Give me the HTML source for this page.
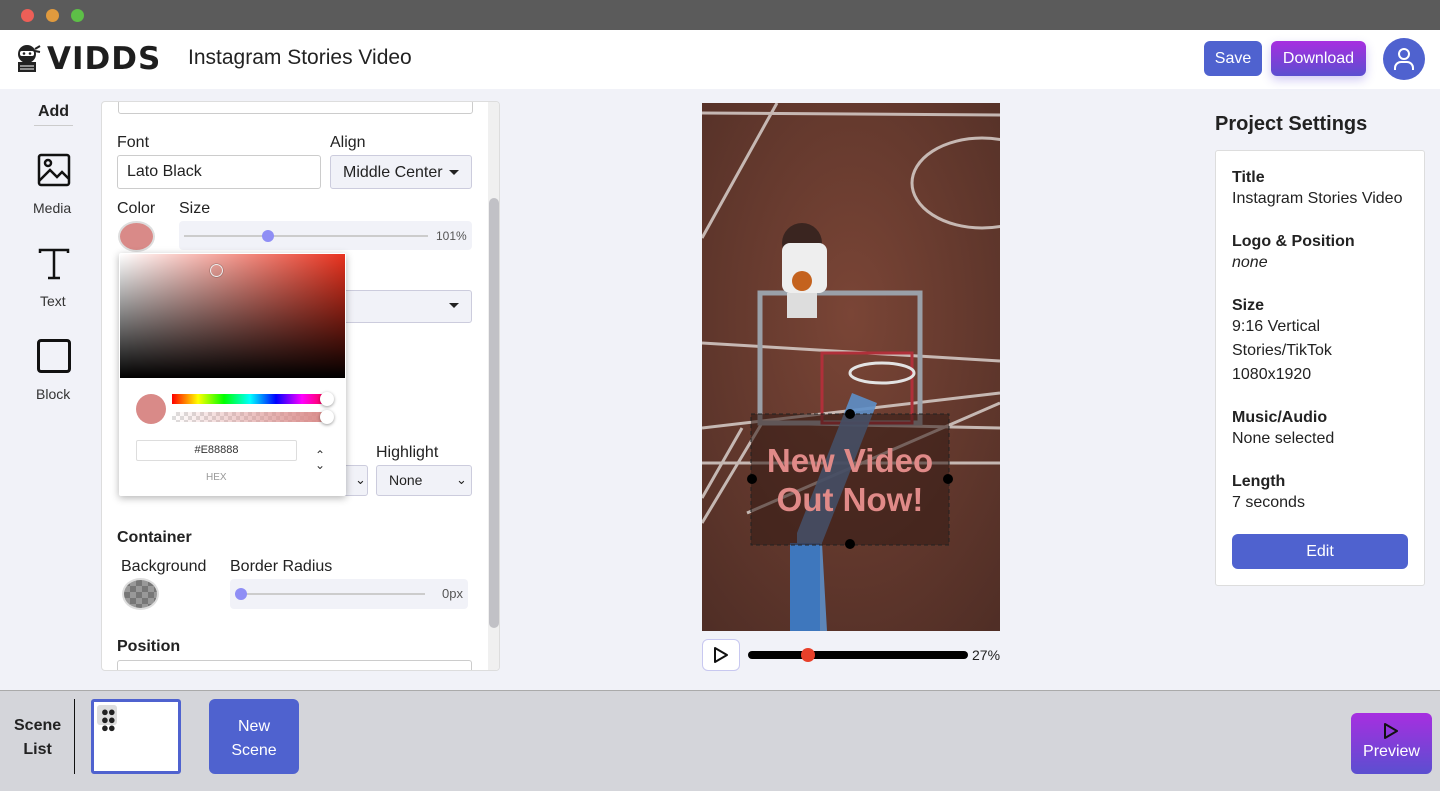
<!DOCTYPE html>
<html><head><meta charset="utf-8"><style>
*{box-sizing:border-box;margin:0;padding:0}
body{width:1440px;height:791px;overflow:hidden;font-family:"Liberation Sans",sans-serif;background:#f1f2f8;position:relative;color:#222}
.a{position:absolute}
.tb{left:0;top:0;width:1440px;height:30px;background:#5b5b5b}
.dot{top:9px;width:13px;height:13px;border-radius:50%}
.hdr{left:0;top:30px;width:1440px;height:59px;background:#fff}
.lbl{font-size:16px;color:#222}
.inp{border:1px solid #ccc;border-radius:3px;background:#fff;font-size:16px;padding:7px 9px}
.sel{border:1px solid #ccd;border-radius:3px;background:#f1f2f8;font-size:16px}
.caret{width:0;height:0;border-left:5px solid transparent;border-right:5px solid transparent;border-top:5px solid #222}
.btn{background:#4f62cf;color:#fff;border-radius:6px;font-size:16px;text-align:center}
.rs b{display:block;font-size:16px;margin-bottom:4px}
.rs div{font-size:16px;margin-bottom:22px;line-height:24px}
</style></head><body>
<div class="a tb"></div>
<div class="a dot" style="left:21px;background:#ed5f57"></div>
<div class="a dot" style="left:46px;background:#e09a3e"></div>
<div class="a dot" style="left:71px;background:#5dbf47"></div>
<div class="a hdr"></div>
<svg class="a" style="left:15px;top:43px" width="26" height="30" viewBox="0 0 26 30"><circle cx="12" cy="11" r="9" fill="#222"/><rect x="5" y="8" width="14" height="5" rx="2" fill="#fff"/><circle cx="9" cy="10.5" r="1.3" fill="#222"/><circle cx="15" cy="10.5" r="1.3" fill="#222"/><path d="M20 6l5-3M20 8l5 1" stroke="#222" stroke-width="2"/><rect x="3" y="19" width="18" height="10" fill="#222"/><path d="M5 23h14M5 26h14" stroke="#fff" stroke-width="1"/></svg>
<div class="a" style="left:47px;top:41px;font-size:31px;font-weight:900;letter-spacing:1px;color:#1e1e1e;font-family:'DejaVu Sans',sans-serif">VIDDS</div>
<div class="a" style="left:188px;top:46px;font-size:21px;color:#222">Instagram Stories Video</div>
<div class="a btn" style="left:1204px;top:41px;width:58px;height:35px;line-height:35px">Save</div>
<div class="a btn" style="left:1271px;top:41px;width:95px;height:35px;line-height:35px;background:linear-gradient(#a72ee0,#5b4fd0);box-shadow:0 4px 10px rgba(100,80,220,.3)">Download</div>
<div class="a" style="left:1383px;top:38px;width:42px;height:42px;border-radius:50%;background:#4f62cf"></div>
<svg class="a" style="left:1392px;top:46px" width="24" height="26" viewBox="0 0 24 26" fill="none" stroke="#fff" stroke-width="2"><circle cx="12" cy="8" r="5"/><path d="M3 24v-2a6 6 0 0 1 6-6h6a6 6 0 0 1 6 6v2"/></svg>

<div class="a" style="left:34px;top:103px;width:39px;text-align:center;font-weight:bold;font-size:16px;border-bottom:1px solid #ccc;padding-bottom:4px">Add</div>
<svg class="a" style="left:37px;top:153px" width="34" height="34" viewBox="0 0 34 34" fill="none" stroke="#111" stroke-width="2.5"><rect x="2" y="2" width="30" height="30" rx="2"/><circle cx="11" cy="10" r="3"/><path d="M2 28l11-11 7 7 5-5 7 7"/></svg>
<div class="a lbl" style="left:33px;top:200px;font-size:14px;color:#333">Media</div>
<svg class="a" style="left:38px;top:248px" width="32" height="32" viewBox="0 0 32 32" fill="none" stroke="#111" stroke-width="2.5"><path d="M2 5V2h28v3M16 2v28M10 30h12"/></svg>
<div class="a" style="left:40px;top:293px;font-size:14px;color:#333">Text</div>
<div class="a" style="left:37px;top:339px;width:34px;height:34px;border:3px solid #111;border-radius:4px"></div>
<div class="a" style="left:36px;top:386px;font-size:14px;color:#333">Block</div>

<div class="a" style="left:101px;top:101px;width:399px;height:570px;background:#fff;border:1px solid #ddd;border-radius:4px;overflow:hidden">
 <div class="a" style="left:16px;top:-2px;width:355px;height:14px;border:1px solid #ccc;border-radius:3px"></div>
 <div class="a" style="left:386px;top:0;width:12px;height:570px;background:#f0f0f0"></div>
 <div class="a" style="left:387px;top:96px;width:10px;height:430px;background:#c1c1c6;border-radius:5px"></div>
</div>
<div class="a lbl" style="left:117px;top:134px">Font</div>
<div class="a lbl" style="left:330px;top:134px">Align</div>
<div class="a inp" style="left:117px;top:155px;width:204px;height:34px">Lato Black</div>
<div class="a sel" style="left:330px;top:155px;width:142px;height:34px;padding:8px 12px">Middle Center</div>
<div class="a caret" style="left:449px;top:170px"></div>
<div class="a lbl" style="left:117px;top:200px">Color</div>
<div class="a lbl" style="left:179px;top:200px">Size</div>
<div class="a" style="left:118px;top:221px;width:37px;height:31px;border-radius:50%;background:#d98a88;border:2px solid #ddd"></div>
<div class="a" style="left:179px;top:221px;width:293px;height:29px;background:#f1f2f8;border-radius:4px"></div>
<div class="a" style="left:184px;top:235px;width:244px;height:2px;background:#ccc"></div>
<div class="a" style="left:262px;top:230px;width:12px;height:12px;border-radius:50%;background:#8f8ef5"></div>
<div class="a" style="left:436px;top:229px;font-size:12px;color:#555">101%</div>
<div class="a sel" style="left:330px;top:290px;width:142px;height:33px"></div>
<div class="a caret" style="left:449px;top:303px"></div>
<div class="a lbl" style="left:376px;top:444px">Highlight</div>
<div class="a sel" style="left:330px;top:465px;width:38px;height:31px"></div>
<div class="a" style="left:355px;top:472px;font-size:13px">⌄</div>
<div class="a sel" style="left:376px;top:465px;width:96px;height:31px;padding:6px 12px;font-size:14px">None</div>
<div class="a" style="left:456px;top:472px;font-size:13px">⌄</div>
<div class="a" style="left:117px;top:529px;font-weight:bold;font-size:16px">Container</div>
<div class="a lbl" style="left:121px;top:558px">Background</div>
<div class="a lbl" style="left:230px;top:558px">Border Radius</div>
<div class="a" style="left:122px;top:578px;width:37px;height:32px;border-radius:50%;background:repeating-conic-gradient(#999 0 25%,#777 0 50%) 0 0/12px 12px;border:2px solid #ddd"></div>
<div class="a" style="left:230px;top:579px;width:238px;height:30px;background:#f1f2f8;border-radius:4px"></div>
<div class="a" style="left:240px;top:593px;width:185px;height:2px;background:#ccc"></div>
<div class="a" style="left:235px;top:588px;width:12px;height:12px;border-radius:50%;background:#8f8ef5"></div>
<div class="a" style="left:442px;top:586px;font-size:13px;color:#555">0px</div>
<div class="a" style="left:117px;top:638px;font-weight:bold;font-size:16px">Position</div>
<div class="a" style="left:117px;top:660px;width:355px;height:10px;border:1px solid #ccc;border-bottom:none;border-radius:3px 3px 0 0"></div>

<div class="a" style="left:119px;top:253px;width:227px;height:243px;background:#fff;box-shadow:0 2px 8px rgba(0,0,0,.3);border-radius:2px">
 <div class="a" style="left:1px;top:1px;width:225px;height:124px;background:linear-gradient(to top,#000,transparent),linear-gradient(to right,#fff,#e8321e)"></div>
 <div class="a" style="left:91px;top:11px;width:13px;height:13px;border-radius:50%;border:1.5px solid #eee;box-shadow:0 0 1px #000"></div>
 <div class="a" style="left:17px;top:141px;width:30px;height:30px;border-radius:50%;background:#d98a88"></div>
 <div class="a" style="left:53px;top:141px;width:156px;height:10px;background:linear-gradient(to right,#f00,#ff0,#0f0,#0ff,#00f,#f0f,#f03)"></div>
 <div class="a" style="left:53px;top:159px;width:156px;height:10px;background:linear-gradient(to right,rgba(217,138,136,0),#d98a88),repeating-conic-gradient(#ddd 0 25%,#fff 0 50%) 0 0/8px 8px"></div>
 <div class="a" style="left:201px;top:139px;width:14px;height:14px;border-radius:50%;background:#fff;box-shadow:0 1px 3px rgba(0,0,0,.4)"></div>
 <div class="a" style="left:201px;top:157px;width:14px;height:14px;border-radius:50%;background:#fff;box-shadow:0 1px 3px rgba(0,0,0,.4)"></div>
 <div class="a" style="left:17px;top:187px;width:161px;height:21px;border:1px solid #ddd;border-radius:2px;font-size:11px;text-align:center;line-height:19px;color:#333">#E88888</div>
 <div class="a" style="left:87px;top:219px;font-size:10px;color:#999">HEX</div>
 <div class="a" style="left:196px;top:197px;font-size:12px;line-height:10px;color:#333">⌃<br>⌄</div>
</div>

<svg class="a" style="left:702px;top:103px" width="298" height="528" viewBox="0 0 298 528">
 <defs><radialGradient id="g" cx=".5" cy=".4" r=".8"><stop offset="0" stop-color="#7a4536"/><stop offset="1" stop-color="#4e2d25"/></radialGradient></defs>
 <rect width="298" height="528" fill="url(#g)"/>
 <g stroke="#d8cfcb" stroke-width="3" fill="none" opacity=".85">
  <path d="M0 135L75 0M0 240L298 258M0 325L298 290M40 325L0 395M0 420L60 320L298 325M0 360L298 360M0 10L298 12"/>
  <ellipse cx="280" cy="80" rx="70" ry="45"/>
  <path d="M45 410L298 300"/>
 </g>
 <rect x="58" y="190" width="160" height="130" fill="none" stroke="#9aa0a8" stroke-width="5"/>
 <path d="M120 250h90v70h-90z" fill="none" stroke="#b0303a" stroke-width="3"/>
 <ellipse cx="180" cy="270" rx="32" ry="10" fill="none" stroke="#e3e3e3" stroke-width="3"/>
 <path d="M150 290L95 430L95 528L125 528L120 440L175 300z" fill="#5d8fc8" opacity=".9"/>
 <path d="M88 440h30v88h-30z" fill="#3e77bd"/>
 <circle cx="100" cy="140" r="20" fill="#3a2520"/>
 <rect x="80" y="140" width="45" height="50" fill="#eee" rx="8"/>
 <circle cx="100" cy="178" r="10" fill="#c4621e"/>
 <rect x="85" y="190" width="30" height="25" fill="#ddd"/>
 <rect x="49" y="311" width="198" height="131" fill="rgba(50,25,20,.55)" stroke="#222" stroke-dasharray="4 3"/>
 <g fill="#000"><circle cx="148" cy="311" r="5"/><circle cx="148" cy="441" r="5"/><circle cx="50" cy="376" r="5"/><circle cx="246" cy="376" r="5"/></g>
 <text x="148" y="369" text-anchor="middle" font-family="Liberation Sans" font-weight="bold" font-size="33" fill="#e08a88">New Video</text>
 <text x="148" y="408" text-anchor="middle" font-family="Liberation Sans" font-weight="bold" font-size="33" fill="#e08a88">Out Now!</text>
</svg>
<div class="a" style="left:702px;top:639px;width:38px;height:32px;border:1px solid #c8c8f0;border-radius:6px;background:#fff"></div>
<svg class="a" style="left:712px;top:646px" width="18" height="18" viewBox="0 0 18 18"><path d="M3 2l12 7-12 7z" fill="none" stroke="#111" stroke-width="2" stroke-linejoin="round"/></svg>
<div class="a" style="left:748px;top:651px;width:220px;height:8px;border-radius:4px;background:#000"></div>
<div class="a" style="left:801px;top:648px;width:14px;height:14px;border-radius:50%;background:#e8402a"></div>
<div class="a" style="left:972px;top:647px;font-size:14px">27%</div>

<div class="a" style="left:1215px;top:113px;font-size:20px;font-weight:bold;color:#222">Project Settings</div>
<div class="a rs" style="left:1215px;top:150px;width:210px;height:436px;background:#fff;border:1px solid #ddd;border-radius:3px;padding:18px 16px">
<b style="margin-bottom:0">Title</b><div>Instagram Stories Video</div>
<b style="margin-bottom:0">Logo &amp; Position</b><div><i>none</i></div>
<b style="margin-bottom:0">Size</b><div>9:16 Vertical<br>Stories/TikTok<br>1080x1920</div>
<b style="margin-bottom:0">Music/Audio</b><div>None selected</div>
<b style="margin-bottom:0">Length</b><div>7 seconds</div>
</div>
<div class="a btn" style="left:1232px;top:534px;width:176px;height:35px;line-height:35px">Edit</div>

<div class="a" style="left:0;top:690px;width:1440px;height:101px;background:#d4d5da;border-top:1px solid #aaa"></div>
<div class="a" style="left:14px;top:714px;font-weight:bold;font-size:16px;text-align:center;line-height:24px">Scene<br>List</div>
<div class="a" style="left:74px;top:699px;width:1px;height:75px;background:#111"></div>
<div class="a" style="left:91px;top:699px;width:90px;height:75px;border:3px solid #4f62cf;border-radius:3px;background:#fff"></div>
<div class="a" style="left:97px;top:705px;width:20px;height:20px;background:#ddd;border-radius:3px;font-size:13px;line-height:8px;padding:3px 0 0 4px;letter-spacing:-1px">●●<br>●●<br>●●</div>
<div class="a btn" style="left:209px;top:699px;width:90px;height:75px;padding-top:16px;line-height:24px">New<br>Scene</div>
<div class="a btn" style="left:1351px;top:713px;width:81px;height:61px;background:linear-gradient(#a72ee0,#5b4fd0);padding-top:30px">Preview</div>
<svg class="a" style="left:1383px;top:722px" width="16" height="18" viewBox="0 0 16 18"><path d="M2 2l12 7-12 7z" fill="none" stroke="#111" stroke-width="2" stroke-linejoin="round"/></svg>
</body></html>
